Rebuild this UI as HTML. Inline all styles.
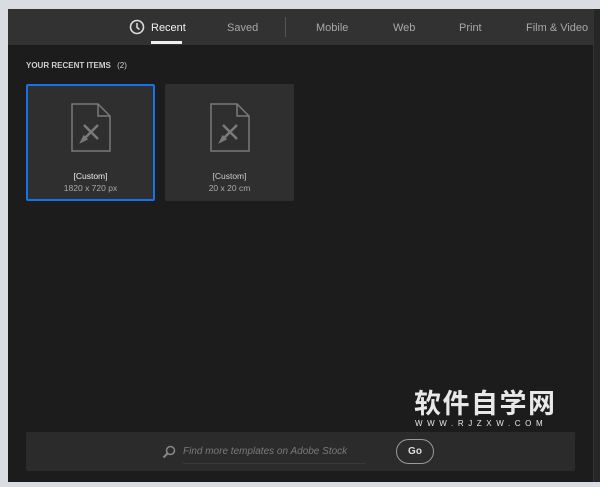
<!DOCTYPE html>
<html><head><meta charset="utf-8"><style>
*{margin:0;padding:0;box-sizing:border-box}
body{width:600px;height:487px;overflow:hidden;background:#d9dde2;font-family:"Liberation Sans","Noto Sans CJK SC",sans-serif;position:relative}
.win{position:absolute;left:8px;top:9px;width:592px;height:473px;background:#1c1c1c}
.rs{position:absolute;left:593px;top:9px;width:7px;height:473px;background:#262626;border-left:1px solid #333}
.hdr{position:absolute;left:0;top:0;width:585px;height:36px;background:#323232}
.tab{position:absolute;top:13px;font-size:11px;color:#a8a8a8}
.card{position:absolute;top:84px;width:129px;height:117px;background:#2f2f2f;border-radius:2px}
.card .t{position:absolute;left:0;width:100%;text-align:center;font-size:8.5px}
</style></head><body>
<div class="win">
 <div class="hdr">
  <svg style="position:absolute;left:121px;top:10px" width="16" height="16" viewBox="0 0 16 16"><circle cx="8" cy="8" r="6.5" fill="none" stroke="#ddd" stroke-width="1.6"/><path d="M8 4v4.5l2.5 2" fill="none" stroke="#ddd" stroke-width="1.5"/></svg>
  <div class="tab" style="left:143px;color:#f0f0f0">Recent</div>
  <div style="position:absolute;left:143px;top:32px;width:31px;height:3px;background:#eee"></div>
  <div class="tab" style="left:219px">Saved</div>
  <div style="position:absolute;left:277px;top:8px;width:1px;height:20px;background:#555"></div>
  <div class="tab" style="left:308px">Mobile</div>
  <div class="tab" style="left:385px">Web</div>
  <div class="tab" style="left:451px">Print</div>
  <div class="tab" style="left:518px">Film &amp; Video</div>
 </div>
 <div style="position:absolute;left:18px;top:52px;font-size:8px;font-weight:bold;color:#cfcfcf">YOUR RECENT ITEMS <span style="font-weight:normal;margin-left:4px">(2)</span></div>
</div>
<div class="rs"></div>
<div class="card" style="left:26px;border:2px solid #1473e6">
 <svg style="position:absolute;left:43px;top:17px" width="42" height="50" viewBox="0 0 42 50"><path d="M1 1H27L39 13V48H1Z M27 1V13H39" fill="none" stroke="#7a7a7a" stroke-width="1.5"/><path d="M13 22L27 36M27 22L13 36M11 38l2-4 2 2z" fill="none" stroke="#7a7a7a" stroke-width="2.5"/></svg>
 <div class="t" style="top:85px;color:#eee">[Custom]</div>
 <div class="t" style="top:97px;color:#aaa">1820 x 720 px</div>
</div>
<div class="card" style="left:165px">
 <svg style="position:absolute;left:45px;top:19px" width="42" height="50" viewBox="0 0 42 50"><path d="M1 1H27L39 13V48H1Z M27 1V13H39" fill="none" stroke="#7a7a7a" stroke-width="1.5"/><path d="M13 22L27 36M27 22L13 36M11 38l2-4 2 2z" fill="none" stroke="#7a7a7a" stroke-width="2.5"/></svg>
 <div class="t" style="top:87px;color:#ccc">[Custom]</div>
 <div class="t" style="top:99px;color:#aaa">20 x 20 cm</div>
</div>
<div style="position:absolute;left:414px;top:390px;font-size:27px;font-weight:bold;color:#e8e8e8;letter-spacing:1.5px;line-height:29px">软件自学网</div>
<div style="position:absolute;left:415px;top:419px;font-size:8px;color:#e8e8e8;letter-spacing:4.6px">WWW.RJZXW.COM</div>
<div style="position:absolute;left:26px;top:432px;width:549px;height:39px;background:#2b2b2b;border-radius:2px">
 <svg style="position:absolute;left:136px;top:13px" width="14" height="14" viewBox="0 0 14 14"><circle cx="8.5" cy="5.5" r="4" fill="none" stroke="#888" stroke-width="1.5"/><path d="M5.5 8.5L1.5 12.5" stroke="#888" stroke-width="2"/></svg>
 <div style="position:absolute;left:157px;top:14px;font-size:10px;font-style:italic;color:#7a7a7a">Find more templates on Adobe Stock</div>
 <div style="position:absolute;left:157px;top:31px;width:183px;height:1px;background:#3a3a3a"></div>
 <div style="position:absolute;left:370px;top:7px;width:38px;height:25px;border:1.5px solid #999;border-radius:13px;color:#ddd;font-size:10px;font-weight:bold;text-align:center;line-height:23px">Go</div>
</div>
</body></html>
